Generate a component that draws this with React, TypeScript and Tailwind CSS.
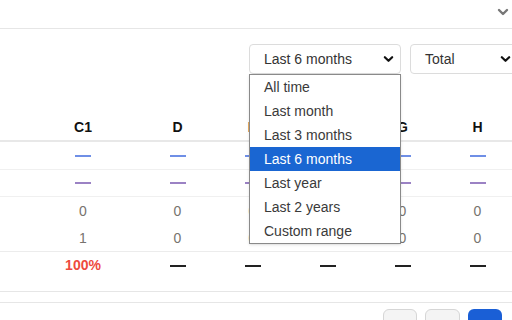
import React from "react";

const cols = "grid grid-cols-[26px_114px_75px_75px_75px_75px_75px]";

function Chevron({ className = "" }: { className?: string }) {
  return (
    <svg viewBox="0 0 12 8" className={className} fill="none" stroke="currentColor" strokeWidth="2.4" strokeLinecap="round" strokeLinejoin="round">
      <path d="M2 2l4 4 4-4" />
    </svg>
  );
}

function Dash({ color }: { color: string }) {
  return <span className={`inline-block h-[2px] w-[16px] ${color}`} />;
}

export default function App() {
  const headers = ["C1", "D", "E", "F", "G", "H"];
  const options = ["All time", "Last month", "Last 3 months", "Last 6 months", "Last year", "Last 2 years", "Custom range"];
  return (
    <div className="relative w-[512px] h-[320px] overflow-hidden bg-white text-[#333]" style={{ fontFamily: '"Liberation Sans", Arial, sans-serif' }}>
      <div className="h-[29px] border-b border-[#e6e6e6] flex items-center justify-end pr-[3px]">
        <Chevron className="w-[12px] h-[8px] text-[#777] mb-[5px]" />
      </div>

      <div className="flex justify-end gap-[9px] pt-[15px] mr-[-20px]">
        <div className="w-[152px] h-[30px] border border-[#dcdcdc] rounded-[4px] flex items-center justify-between pl-[14px] pr-[6px] text-[14px]">
          <span>Last 6 months</span>
          <Chevron className="w-[11px] h-[8px] text-[#111]" />
        </div>
        <div className="w-[122px] h-[30px] border border-[#dcdcdc] rounded-[4px] flex items-center justify-between pl-[14px] pr-[20px] text-[14px]">
          <span>Total</span>
          <Chevron className="w-[11px] h-[8px] text-[#111]" />
        </div>
      </div>

      <div className="mt-[40px]">
        <div className={`${cols} h-[28px] items-center text-[14px] font-bold text-[#111] border-b-2 border-[#e8e8e8]`}>
          <div />
          {headers.map((h) => (
            <div key={h} className="text-center">{h}</div>
          ))}
        </div>
        <div className={`${cols} h-[28px] items-center border-b border-[#f0f0f0]`}>
          <div />
          {headers.map((h) => (
            <div key={h} className="flex justify-center"><Dash color="bg-[#6f8fe6]" /></div>
          ))}
        </div>
        <div className={`${cols} h-[27px] items-center border-b border-[#f0f0f0]`}>
          <div />
          {headers.map((h) => (
            <div key={h} className="flex justify-center"><Dash color="bg-[#9b82c4]" /></div>
          ))}
        </div>
        <div className={`${cols} h-[28px] items-center text-[14px] text-[#77736e]`}>
          <div />
          {["0", "0", "0", "0", "0", "0"].map((v, i) => (
            <div key={i} className="text-center">{v}</div>
          ))}
        </div>
        <div className={`${cols} h-[27px] items-center text-[14px] text-[#77736e] border-b border-[#ececec]`}>
          <div />
          {["1", "0", "0", "0", "0", "0"].map((v, i) => (
            <div key={i} className="text-center">{v}</div>
          ))}
        </div>
        <div className={`${cols} h-[40px] pt-[5px] border-b border-[#e6e6e6]`}>
          <div />
          <div className="text-center text-[14px] font-bold text-[#ee4a3e] leading-[17px]">100%</div>
          {[1, 2, 3, 4, 5].map((i) => (
            <div key={i} className="flex justify-center pt-[8px]"><Dash color="bg-[#222]" /></div>
          ))}
        </div>
      </div>

      <div className="mt-[10px] border-t border-[#e6e6e6] flex justify-end gap-[8px] pt-[6px] pr-[10px]">
        <div className="w-[34px] h-[32px] rounded-[6px] border border-[#d6d6d6] bg-[#f4f4f4]" />
        <div className="w-[35px] h-[32px] rounded-[6px] border border-[#d6d6d6] bg-[#f4f4f4]" />
        <div className="w-[34px] h-[32px] rounded-[6px] bg-[#1a5fd6]" />
      </div>

      <div className="absolute left-[249px] top-[74px] w-[152px] border border-[#8a8a8a] bg-white text-[14px] shadow-sm">
        {options.map((o) => (
          <div
            key={o}
            className={`h-[24px] flex items-center pl-[14px] ${o === "Last 6 months" ? "bg-[#1a66d2] text-white" : "text-[#3a3a3a]"}`}
          >
            {o}
          </div>
        ))}
      </div>
    </div>
  );
}
